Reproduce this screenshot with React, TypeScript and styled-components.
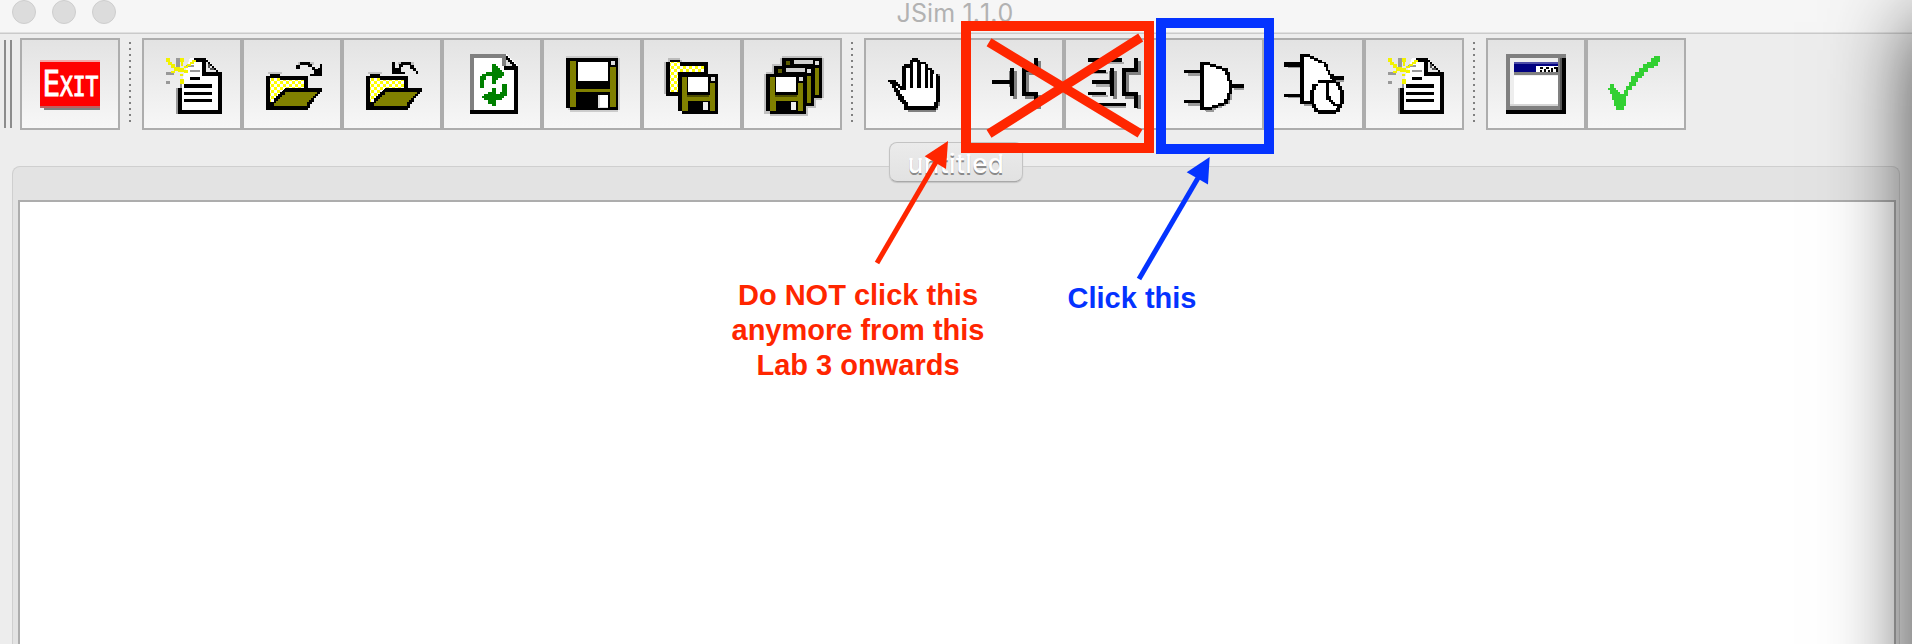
import React from "react";
import styled, { createGlobalStyle } from "styled-components";

const GlobalStyle = createGlobalStyle`
  * { box-sizing: border-box; }
  html, body, #root { margin: 0; height: 100%; }
  body { overflow: hidden; background: #ededed; }
`;

const Window = styled.div`
  position: relative;
  display: flex;
  flex-direction: column;
  width: 1912px;
  height: 644px;
  overflow: hidden;
  background: #ededed;
  font-family: Inter, "Liberation Sans", sans-serif;
`;

const TitleBar = styled.header`
  display: grid;
  grid-template-columns: 116px 1fr 118px;
  flex: none;
  height: 34px;
  background: #f6f6f6;
  border-bottom: 1px solid #cacaca;
  box-shadow: inset 0 -1px 0 #e0e0e0;
`;

const Lights = styled.div`
  display: flex;
  gap: 16px;
  padding-left: 12px;
`;

const Light = styled.span`
  flex: none;
  width: 24px;
  height: 24px;
  border-radius: 50%;
  border: 1px solid #cecece;
  background: #dcdcdc;
`;

const Title = styled.h1`
  margin: 0;
  text-align: center;
  font-size: 25px;
  font-weight: 400;
  line-height: 26px;
  font-kerning: none;
  font-feature-settings: "calt" 0;
  letter-spacing: 0.1px;
  color: #b2b2b2;
`;

const Toolbar = styled.nav`
  display: flex;
  flex: none;
  height: 98px;
  padding-top: 4px;
`;

const Handle = styled.span`
  width: 8px;
  height: 88px;
  margin: 2px 8px 0 4px;
  border: solid #8c8c8c;
  border-width: 0 2px;
`;

const Separator = styled.span`
  width: 2px;
  height: 80px;
  margin: 4px 11px 0 9px;
  background: repeating-linear-gradient(#808080 0 2px, transparent 2px 6px);
`;

const ToolButton = styled.button`
  display: flex;
  align-items: center;
  justify-content: center;
  width: 100px;
  height: 92px;
  padding: 0;
  border: 2px solid #adadad;
  background: linear-gradient(#e3e3e3, #f7f7f7);
`;

const Glyph = styled.svg`
  display: block;
  width: 60px;
  height: 60px;
  overflow: visible;
`;

const TabStrip = styled.div`
  position: relative;
  z-index: 1;
  display: flex;
  justify-content: center;
  flex: none;
  height: 40px;
  margin-top: 10px;
`;

const Tab = styled.div`
  width: 134px;
  height: 40px;
  border: 1px solid #c3c3c3;
  border-bottom-color: #a9a9a9;
  border-radius: 8px;
  background: linear-gradient(#ebebeb, #e2e2e2);
  box-shadow: 0 1px 1px #c4c4c4;
  color: #fff;
  font-size: 26px;
  font-weight: 500;
  line-height: 41px;
  letter-spacing: 0.4px;
  text-align: center;
  text-shadow: 0 2px 0 #8a8a8a;
`;

const Pane = styled.main`
  display: flex;
  flex: 1;
  margin: -16px 12px 0;
  padding: 33px 3px 0 5px;
  border: 1px solid #cfcfcf;
  border-bottom: 0;
  border-radius: 8px 8px 0 0;
  background: #e3e3e3;
`;

const Canvas = styled.div`
  flex: 1;
  border: 2px solid #adadad;
  border-bottom: 0;
  background: #fff;
`;

const EdgeShade = styled.div`
  position: absolute;
  z-index: 2;
  left: 1914px;
  top: 22px;
  width: 400px;
  height: 900px;
  box-shadow: 0 0 80px rgba(0, 0, 0, 0.72);
`;

const Marks = styled.svg`
  position: absolute;
  z-index: 3;
  inset: 0;
`;

const Note = styled.p<{ $x: number; $y: number; $color: string }>`
  position: absolute;
  z-index: 3;
  left: ${(p) => p.$x}px;
  top: ${(p) => p.$y}px;
  margin: 0;
  transform: translateX(-50%);
  color: ${(p) => p.$color};
  font: bold 29px/35px "Liberation Sans", Arial, sans-serif;
  text-align: center;
  white-space: nowrap;
`;

const OLIVE = "#808000";
const GREY = "#808080";

const Icon = ({ children, crisp = true }: { children: React.ReactNode; crisp?: boolean }) => (
  <Glyph viewBox="0 0 30 30" shapeRendering={crisp ? "crispEdges" : "auto"}>
    {children}
  </Glyph>
);

const Dither = ({ id }: { id: string }) => (
  <pattern id={id} width="3" height="3" patternUnits="userSpaceOnUse">
    <path fill="#ff0" d="M0 0h3v3h-3z" />
    <path fill="#fff" d="M0 0h1.5v1.5h-1.5zM1.5 1.5h1.5v1.5h-1.5z" />
  </pattern>
);

const ExitIcon = () => (
  <Icon>
    <path fill="#f4a6a6" d="M0 3h30v1h-30z" />
    <path fill={GREY} d="M2 26h28v2h-28z" />
    <path fill="#f00" d="M0 4h30v22h-30z" />
    <path fill="#c06060" d="M0 26h30v1h-30z" />
    <text
      y="21"
      fill="#fff"
      stroke="#fff"
      strokeWidth="0.5"
      fontFamily="DejaVu Sans Mono, monospace"
      fontSize="18"
      textLength="28"
      lengthAdjust="spacingAndGlyphs"
      x="1.2"
    >
      E<tspan fontSize="13.2">XIT</tspan>
    </text>
  </Icon>
);

const NewIcon = () => (
  <Icon>
    <path fill="#fff" d="M14 2h8l7 8v19h-20v-13z" />
    <path fill="#9a9a9a" d="M7 17h1v13h-1z" />
    <path d="M8 17h2v11h18v-17h-8v-7h-4v-2h6v1h1v1h1v1h1v1h1v1h1v1h1v1h2v21h-22z" />
    <path fill="#e8e8e8" d="M22 4h1v1h1v1h1v1h1v1h1v1h-5z" />
    <path fill="#555" d="M23 5h1v2h2v1h-2v-1h-1z" />
    <path d="M11 15h14v2h-14zM11 19h14v1.5h-14zM11 22.5h14v1.5h-14zM14 11.5h5v1.5h-5z" />
    <path fill="#999" d="M7 2h2v6h-2zM9 17h1v-3h-1zM2 9h4v1.5h-4zM2 13.5h2v1.5h-2zM14 8h5v1h-5zM12 5.5h4v1h-4z" />
    <path
      fill="#f2f200"
      d="M2 2h2v2h-2zM3 4h2v1.500h-2zM4.500 5h2v2h-2zM6 6.500h3v2h-3zM9 2h2v2h-2zM9.500 4h1v2h-1zM8 7h3v2h-3zM11 8h2v1.500h-2zM15 3h2v1h-2zM14 4h2v1h-2zM12.500 5h2v1h-2zM11 6h2v1h-2zM4.500 8.500h2v1h-2zM9 12.500h2v2.500h-2zM9 10h1.500v1h-1.500z"
    />
  </Icon>
);

const OpenFolder = ({ id }: { id: string }) => (
  <>
    <defs><Dither id={id} /></defs>
    <path fill="#c4c4c4" d="M3 9h7v1h-7z" />
    <path d="M2 11h2v-1h5v1h14v6h7v2h-1v1h-1v1h-1v1h-1v2h-1v1h-1v2h-1v1h-21z" />
    <path fill={`url(#${id})`} d="M4 12h5v1h12v4h-9.500l-1.500 2h-1v1h-1v1h-1v1h-1v2h-2z" />
    <path fill={OLIVE} d="M11.500 19h16v1h-1v1h-1v1h-1v1h-1v1h-1v2h-16.500v-1.500h1v-1h1v-1h1v-1h1v-1h1.500z" />
  </>
);

const OpenIcon = () => (
  <Icon>
    <OpenFolder id="dither-open" />
    <path fill="#c0c0c0" d="M18 4h8v1.500h-8z" />
    <path d="M17 5.500h2v2h-2zM19 4h5v1.500h-5zM23 5h2v1.500h-2zM25 6.500h1.500v1.500h-1.500zM26 7.500h2v1.500h-2zM29 5h1v6h-6v-1h2v-1h1v-1h1v-1h1z" />
  </Icon>
);

const RevertIcon = () => (
  <Icon>
    <OpenFolder id="dither-revert" />
    <path fill="#c0c0c0" d="M18 4h8v1.500h-8z" />
    <path d="M15 4h1.500v3h2v-2h1v-1h5v1.500h-4v1h-1v2.500h2v1h-6.500zM24 5.500h2v2h-2zM25.500 7h1.500v1.500h-1.500zM27 8.500h1v1.500h-1z" />
  </Icon>
);

const ReloadIcon = () => (
  <Icon>
    <path fill="#fff" d="M4 0h18l6 6v24h-24z" />
    <path fill={GREY} d="M4 0h18v6h-2v-4h-14v26h-2z" />
    <path d="M22 1h1v1h1v1h1v1h1v1h1v1h1v24h-24v-2h22v-20h-5v-2h1z" />
    <path fill="#ddd" d="M22 3h1v1h1v1h1v1h-3z" />
    <path fill="#008000" d="M15 5h2v1h1v1h1v1h1v1h1v2h-1v1h-2v1h-1v2h-2v-4h-3v2h-1v4h-2v-6h1v-1h2v-1h3z" />
    <path fill="#008000" d="M15 17h2v3h2v-1h1v-4h2.500v6h-1.500v1h-1v1h-3v3h-2v-1h-2v-2h-2v-1h-1v-1h1v-1h2v-1h2z" />
  </Icon>
);

const SaveIcon = () => (
  <Icon>
    <path fill="#ccc" d="M2 1h26v1h1v26h-1v1h-24v-1h-1z" />
    <path d="M2 2h26v26h-24v-1h-2z" />
    <path fill={OLIVE} d="M4 3.500h3v14h17v-11h3v20h-3v-7.500h-17v7.500h-3z" />
    <path fill="#fff" d="M8 4h15v9.500h-15z" />
    <path fill="#ddd" d="M24.500 3.500h2v2h-2zM18 20.500h5v6.500h-5z" />
    <path fill="#fff" d="M19 20.500h4v6h-4z" />
  </Icon>
);

const Floppy = ({ x, y, covered = false }: { x: number; y: number; covered?: boolean }) => (
  <g transform={`translate(${x} ${y})`}>
    <path d="M0 0h20v20h-18v-1.500h-2z" />
    {covered ? (
      <>
        <path fill="#5c5c00" d="M2 1.500h2v2h-2z" />
        <path fill={OLIVE} d="M16.500 5h2v13.500h-2z" />
        <path fill="#d0d0d0" d="M6 1.200h9.500v1.800h-9.500z" />
      </>
    ) : (
      <>
        <path fill={OLIVE} d="M2 1.500h2.500v9h11.500v-6h2.500v14h-2.500v-5h-11v5h-3z" />
        <path fill="#4c4c00" d="M4.500 10.500h11v1h-11z" />
        <path fill="#fff" d="M5 1.500h10v7.500h-10z" />
        <path fill="#eee" d="M12.500 14h2.500v4h-2.500z" />
      </>
    )}
    <path fill="#ddd" d="M16.500 1.500h2v2h-2z" />
  </g>
);

const SaveAsIcon = () => (
  <Icon>
    <defs><Dither id="dither-save" /></defs>
    <path fill="#bbb" d="M1 4h2v-2h6v1h1v1h13v2h-21v14h-1z" />
    <path d="M2 4h2v-1h5v1h14v7h-14v10h-7z" />
    <path fill="url(#dither-save)" d="M4 4h5v2h12v3h-13v10h-4z" />
    <Floppy x={8} y={10} />
  </Icon>
);

const SaveAllIcon = () => (
  <Icon>
    <path fill="#c0c0c0" d="M9 2h1v-1h20v1h1v20h-1v1h-3v4h-4v4h-19v-1h-3v-20h1v-1h3v-4h4z" />
    <Floppy x={10} y={2} covered />
    <Floppy x={6} y={6} covered />
    <Floppy x={2} y={10} />
  </Icon>
);

const HAND =
  "M2 13h4v1h1v1h1v1h1v-10h1v-1h3v-2h1v-1h3v1h1v1h3v1h1v2h2v1h1v2h2v1h1v13h-1v3h-1v1h-16v-3h-1v-1h-1v-1h-1v-2h-1v-2h-1v-2h-1v-2h-1v-1h-1z";

const HandIcon = () => (
  <Icon>
    <path fill={GREY} transform="translate(2 2)" d="M10 26h14v-3h1v-15h1v16h-1v2h-1v1h-14zM9 6h14v18h-14z" />
    <path fill="#000" d={HAND} />
    <path
      fill="#fff"
      d="M4 15h2v1h1v1h1v1h3v-11h2v10h1.500v-13h2v13h2v-12h2v12h1.500v-9h1v9h1.500v-7h1.500v14h-1v2h-13v-2h-1v-1h-1v-2h-1v-1h-1v-2h-1v-1h-1v-2h-1z"
    />
  </Icon>
);

const MOS_BODY = "M4 13h9v-6h2v14h-2v-6h-9zM19 7h6v-5h2v7h-6v10h6v8h-2v-6h-6z";
const MOS_SHADOW = "M11 7h4v14h-2v-6h-2zM19 7h6v-5h2v7h-6v10h6v7h-2v-5h-6z";

const MosIcon = () => (
  <Icon>
    <path fill={GREY} transform="translate(1.5 1.5)" d={MOS_SHADOW} />
    <path d={MOS_BODY} />
  </Icon>
);

const MosGroupIcon = () => (
  <Icon>
    <path fill="#aaa" d="M4 4h16v1h-16zM4 9h8v1h-8zM6 15h8v1.500h-8zM4 20.500h8v1h-8zM4 26h17v1h-17z" />
    <path fill={GREY} transform="translate(1.500 1.500)" d={MOS_SHADOW} />
    <path d={MOS_BODY} />
    <path d="M2 2h17v2h-17zM2 8h9v1.500h-9zM2 19h9v1.500h-9zM2 24.500h19v1.500h-19z" />
  </Icon>
);

const GateIcon = () => (
  <Icon>
    <path fill="#999" d="M2 9.500h6v1.500h-6zM2 24.500h6v1.500h-6zM10 28h4v-1h3v-1h3v-1h2v-2h1v-4h1v4h-1v2h-2v1h-2v1h-3v1h-1v1h-4zM25 17h5v1h-5z" />
    <path d="M8 4h5v1h3v1h3v1h3v2h1v4h1v2h6v2h-6v3h-1v3h-1v2h-2v1h-3v1h-3v1h-6v-3.500h-8v-1.500h8v-13.500h-8v-1.500h8z" />
    <path fill="#fff" d="M10 5.500h3v1h3v1h3v1h1.500v2h1v3h1v6h-1v3h-1.500v2h-3v1h-3v1h-4z" />
  </Icon>
);

const TimedGateIcon = () => (
  <Icon>
    <path fill="#999" d="M2 5.500h6v1.500h-6zM2 20.500h6v1.500h-6zM10 24h5v2h-5zM24 13h6v1h-6z" />
    <path d="M0 4h8v-4h5v1h2v1h2v1h2v1h2v1h1v3h1v2h2v1h5v2h-6v11h-10v1h-6v-3.500h-8v-1.500h8v-13.500h-8z" />
    <path fill="#fff" d="M10 1.500h3v1h2v1h2v1h3v2h1v2h1v2h1v2h1v10h-11v1h-3z" />
    <path d="M17 13h9v1h2v2h1v2h1v7h-1v2h-1v2h-2v1h-9v-1h-2v-2h-1v-2h-1v-7h1v-3h3z" />
    <path fill="#fff" d="M17 14.500h9v1.500h1v2h1v7h-1v2h-1v1h-9v-1h-1v-2h-1v-7h1v-2h1z" />
    <path d="M21 14h1.500v7h1v2h1v1h1v1h2v2h-1v-1h-2v-1h-1v-1h-1v-1h-1.500z" />
  </Icon>
);

const WindowIcon = () => (
  <Icon>
    <path d="M2 2h28v28h-30v-2h2z" />
    <path fill={GREY} d="M0 0h30v2h-2v26h-28z" />
    <path fill="#555" d="M27 2h1v26h-1z" />
    <path fill="#eee" d="M2 2h24v24h-24z" />
    <path fill="#fff" d="M4 11h22v14h-22z" />
    <path fill="#000080" d="M4 4h22v5h-22z" />
    <path fill="#4c4ca6" d="M4 4h22v1h-22z" />
    <path fill={GREY} d="M4 9h22v1.700h-22z" />
    <path fill="#d5d5d5" d="M2 25h24v1h-24z" />
    <path fill="#fff" d="M15 6h11v3h-11z" />
    <path d="M17 6.500h1.500v1h-1.500zM17 8h1v1h-1zM19 7.500h1v1.500h-1zM20 6.500h1.500v1h-1.500zM21 8h1v1h-1zM22.500 7h1v2h-1zM24 6.500h2v1h-2zM25 7.500h1v1.500h-1z" />
  </Icon>
);

const CheckIcon = () => (
  <Icon crisp={false}>
    <path
      fill="#32d032"
      d="M0 17h2v-2h2v2h1v1h1v1h1v1h2v-2h1v-2h1.500v-2h1v-3h2v-2h2v-2h2v-2h2v-1h2v-2h1.500v-1h3v3h-1v2h-2v1h-3v2h-2v2h-1v1h-2v2h-1v2h-2v2h-2v3h-1v5h-1v2h-4v-2h-1v-3h-1v-3h-1v-2h-1v-1h-2z"
    />
  </Icon>
);

const groups: [string, React.ComponentType][][] = [
  [["Exit", ExitIcon]],
  [
    ["New", NewIcon],
    ["Open", OpenIcon],
    ["Revert", RevertIcon],
    ["Reload", ReloadIcon],
    ["Save", SaveIcon],
    ["Save as", SaveAsIcon],
    ["Save all", SaveAllIcon],
  ],
  [
    ["Stop", HandIcon],
    ["Device simulation", MosIcon],
    ["Fast transient", MosGroupIcon],
    ["Gate simulation", GateIcon],
    ["Timing analysis", TimedGateIcon],
    ["New plot", NewIcon],
  ],
  [
    ["Plot window", WindowIcon],
    ["Checkoff", CheckIcon],
  ],
];

const RED = "#ff2600";
const BLUE = "#0433ff";

export default function App() {
  return (
    <Window>
      <GlobalStyle />
      <TitleBar>
        <Lights>
          <Light />
          <Light />
          <Light />
        </Lights>
        <Title>JSim 1.1.0</Title>
      </TitleBar>
      <Toolbar>
        <Handle />
        {groups.map((group, i) => (
          <React.Fragment key={i}>
            {i > 0 && <Separator />}
            {group.map(([label, Drawing]) => (
              <ToolButton key={label} aria-label={label}>
                <Drawing />
              </ToolButton>
            ))}
          </React.Fragment>
        ))}
      </Toolbar>
      <TabStrip>
        <Tab>untitled</Tab>
      </TabStrip>
      <Pane>
        <Canvas />
      </Pane>
      <EdgeShade />
      <Marks width="1912" height="644" viewBox="0 0 1912 644" fill="none">
        <g stroke={RED}>
          <rect x="966" y="26" width="183" height="122" strokeWidth="10" />
          <path strokeWidth="9.300" d="M989 42.300L1140 133.500M989 133.800L1140.700 37.500" />
          <path strokeWidth="5" d="M877 263L936 162" />
          <path stroke="none" fill={RED} d="M948 141L924.700 156.300L946 169z" />
        </g>
        <g stroke={BLUE}>
          <rect x="1161" y="23" width="108" height="126" strokeWidth="10" />
          <path strokeWidth="5" d="M1139 279L1198 178" />
          <path stroke="none" fill={BLUE} d="M1209.700 157L1186.700 172.300L1208 184.500z" />
        </g>
      </Marks>
      <Note $x={858} $y={278} $color={RED}>
        Do NOT click this
        <br />
        anymore from this
        <br />
        Lab 3 onwards
      </Note>
      <Note $x={1132} $y={281} $color={BLUE}>Click this</Note>
    </Window>
  );
}
